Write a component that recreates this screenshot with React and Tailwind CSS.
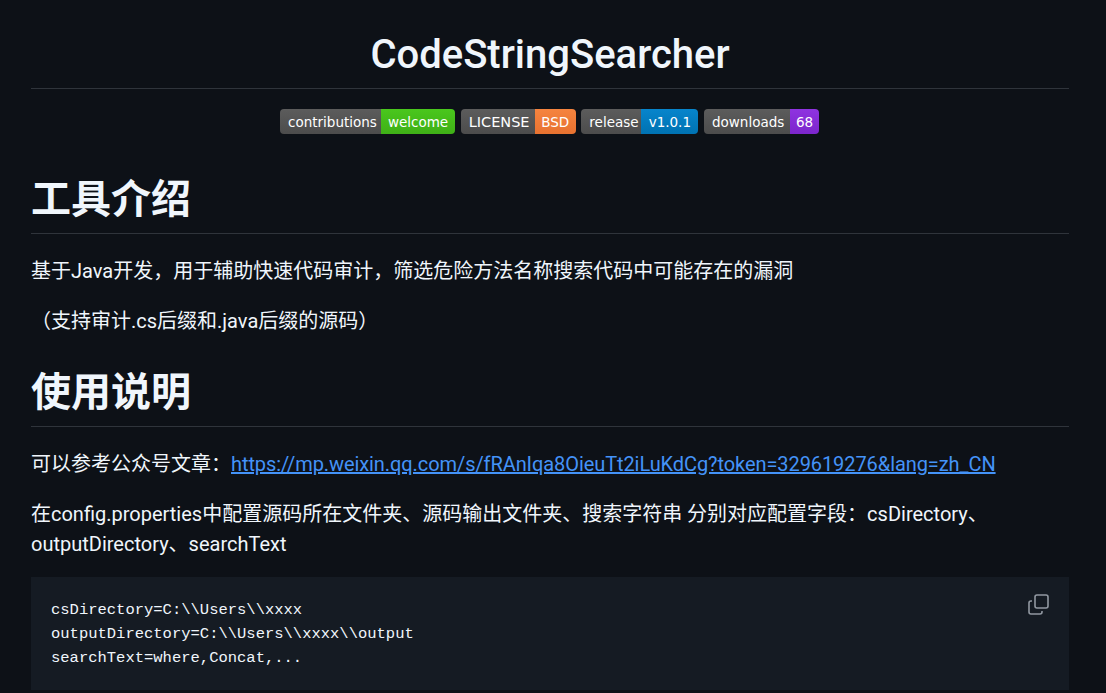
import React from 'react';

const sans = "font-['Roboto','Noto_Sans_CJK_SC',sans-serif]";

const badges = [
  { label: 'contributions', value: 'welcome', lw: 'w-[101px]', vw: 'w-[74px]', color: 'from-[#4ac71d] to-[#3fb017]' },
  { label: 'LICENSE', value: 'BSD', lw: 'w-[74px] text-[14.5px]', vw: 'w-[41px]', color: 'from-[#f5843f] to-[#e87230]' },
  { label: 'release', value: 'v1.0.1', lw: 'w-[60px]', vw: 'w-[57px]', color: 'from-[#0785cc] to-[#0072b2]' },
  { label: 'downloads', value: '68', lw: 'w-[86px]', vw: 'w-[29px]', color: 'from-[#8f33e0] to-[#7c26cc]' },
];

const Badge = ({ label, value, lw, vw, color }) => (
  <span className="flex h-[25px] overflow-hidden rounded-[4px] text-[13.5px] leading-[26px] text-white font-['DejaVu_Sans','Liberation_Sans',sans-serif]">
    <span className={`${lw} bg-linear-to-b from-[#5c5c5c] to-[#4c4c4c] pl-[8px]`}>{label}</span>
    <span className={`${vw} bg-linear-to-b ${color} text-center`}>{value}</span>
  </span>
);

const Heading = ({ children }) => (
  <h2 className="mt-[32px] mb-[22px] border-b border-[#2f343b] pb-[8px] text-[40px] leading-[50px] font-bold text-[#f0f6fc]">
    {children}
  </h2>
);

export default function App() {
  return (
    <div className={`h-[693px] overflow-hidden bg-[#0d1117] pr-[37px] pl-[31px] pt-[25px] text-[20px] leading-[30px] text-[#f0f6fc] ${sans}`}>
      <h1 className="border-b border-[#2f343b] pb-[3px] text-center text-[40px] leading-[60px] font-medium">
        CodeStringSearcher
      </h1>

      <div className="mt-[20px] mb-[41px] flex justify-center gap-[5.67px] pr-[1px]">
        {badges.map((b) => (
          <Badge key={b.label} {...b} />
        ))}
      </div>

      <Heading>工具介绍</Heading>
      <p className="mb-[20px]">基于Java开发，用于辅助快速代码审计，筛选危险方法名称搜索代码中可能存在的漏洞</p>
      <p className="mb-[20px]">（支持审计.cs后缀和.java后缀的源码）</p>

      <Heading>使用说明</Heading>
      <p className="mb-[20px]">
        可以参考公众号文章：
        <a className="tracking-[-0.08px] text-[#4493f8] underline" href="#">
          https://mp.weixin.qq.com/s/fRAnIqa8OieuTt2iLuKdCg?token=329619276&amp;lang=zh_CN
        </a>
      </p>
      <p className="mb-[18px]">
        在config.properties中配置源码所在文件夹、源码输出文件夹、搜索字符串 分别对应配置字段：csDirectory、outputDirectory、searchText
      </p>

      <div className="relative h-[113px] bg-[#151b23] px-[20px] pt-[21px] font-['Liberation_Mono',monospace] text-[15.5px] leading-[24px] text-[#f0f6fc]">
        <pre className="font-[inherit]">{`csDirectory=C:\\\\Users\\\\xxxx
outputDirectory=C:\\\\Users\\\\xxxx\\\\output
searchText=where,Concat,...`}</pre>
        <svg className="absolute top-[17px] right-[20px] text-[#9198a1]" width="21" height="21" viewBox="0 0 21 21" fill="none" stroke="currentColor" strokeWidth="1.6">
          <rect x="7" y="1" width="13" height="13" rx="2" />
          <path d="M4 7H3a2 2 0 0 0-2 2v9a2 2 0 0 0 2 2h9a2 2 0 0 0 2-2v-1" />
        </svg>
      </div>
    </div>
  );
}
